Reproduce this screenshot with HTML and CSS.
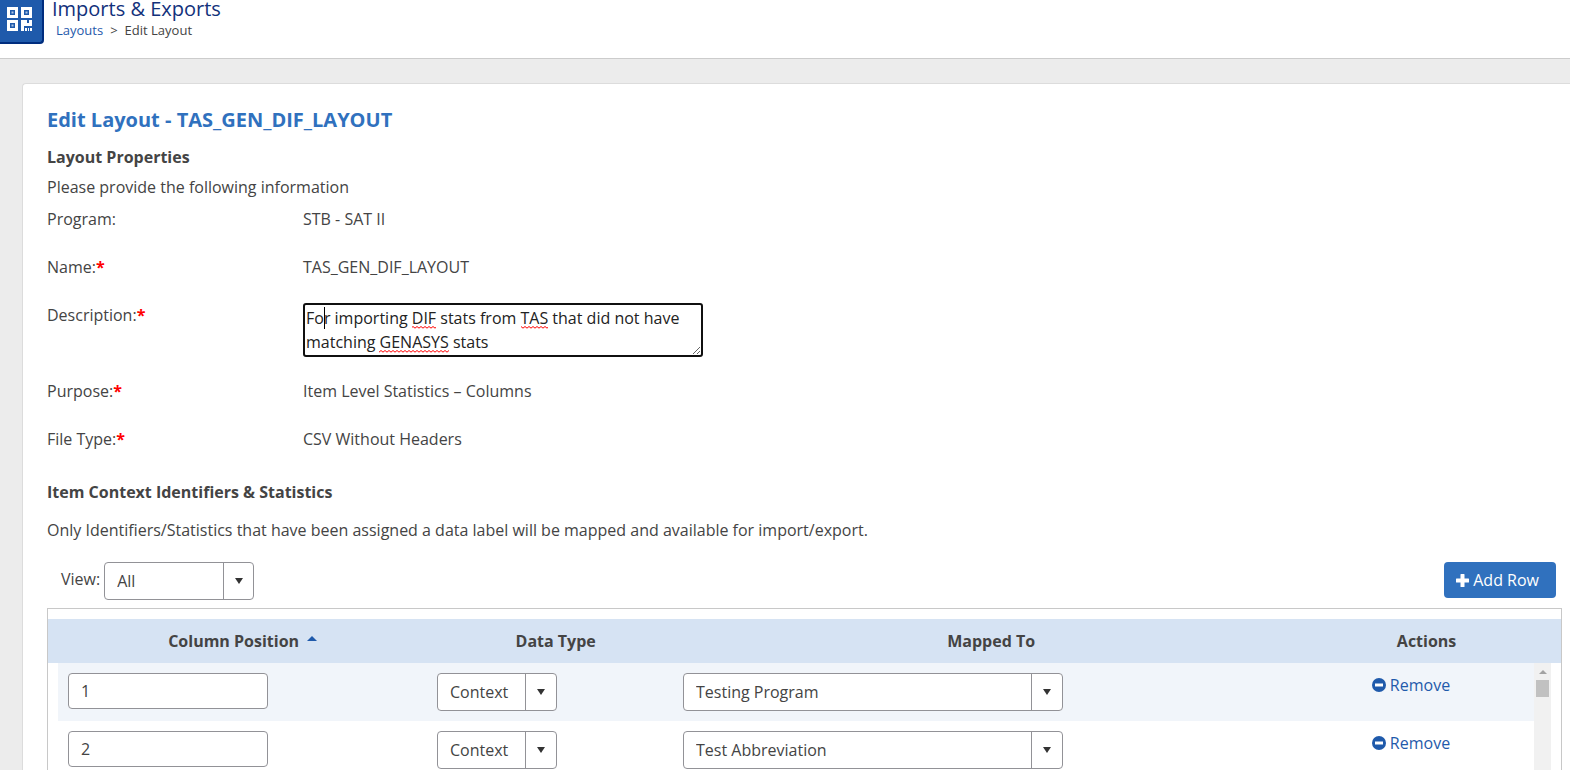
FILE: index.html
```
<!DOCTYPE html>
<html lang="en">
<head>
<meta charset="utf-8">
<meta name="viewport" content="width=device-width, initial-scale=1">
<title>Imports &amp; Exports - Edit Layout</title>
<link rel="stylesheet" href="styles.css">
</head>
<body>
<header class="app-header">
  <div class="app-icon">
    <svg viewBox="0 0 25 24" width="25" height="24" aria-hidden="true">
      <g fill="none" stroke="#fff" stroke-width="3">
        <path d="M1.5 1.5h8v8h-8zM15.500 1.500h8v8h-8zM1.500 14.500h8v8h-8z"/>
      </g>
      <path fill="#fff" d="M4.500 4.500h2v2h-2zM18.500 4.500h2v2h-2zM4.500 17.500h2v2h-2z" opacity=".65"/>
      <path fill="#fff" d="M14 13h6v3h2v-3h3v6h-8v5h-3zM18 21h2v3h-2zM21 21h1v3h-1zM23 21h2v3h-2z"/>
    </svg>
  </div>
  <div class="app-heading">
    <h1 class="app-title">Imports &amp; Exports</h1>
    <nav class="breadcrumb" aria-label="Breadcrumb">
      <a href="#">Layouts</a><span>&gt;</span><span>Edit Layout</span>
    </nav>
  </div>
</header>

<main class="card">
  <h2 class="page-title">Edit Layout - TAS_GEN_DIF_LAYOUT</h2>
  <h3 class="section-title">Layout Properties</h3>
  <p class="intro">Please provide the following information</p>

  <dl class="properties">
    <dt>Program:</dt><dd>STB - SAT II</dd>
    <dt>Name:<b class="required">*</b></dt><dd>TAS_GEN_DIF_LAYOUT</dd>
    <dt><label for="description">Description:<b class="required">*</b></label></dt>
    <dd class="description">
      <textarea id="description" rows="2" spellcheck="false">For importing DIF stats from TAS that did not have matching GENASYS stats</textarea>
      <svg class="spelling" viewBox="0 0 400 54" width="400" height="54" aria-hidden="true">
        <defs>
          <pattern id="squiggle" width="4" height="3" patternUnits="userSpaceOnUse">
            <path d="M-1 3L2 0.500L5 3" fill="none" stroke="#f00" stroke-width="1"/>
          </pattern>
        </defs>
        <g fill="url(#squiggle)">
          <rect x="109" y="0" width="24" height="3" transform="translate(0 23)"/>
          <rect x="218" y="0" width="27" height="3" transform="translate(0 23)"/>
          <rect x="76" y="0" width="70" height="3" transform="translate(0 47)"/>
        </g>
        <path d="M21 4h1v22h-1z" fill="#000"/>
      </svg>
    </dd>
    <dt>Purpose:<b class="required">*</b></dt><dd>Item Level Statistics – Columns</dd>
    <dt>File Type:<b class="required">*</b></dt><dd>CSV Without Headers</dd>
  </dl>

  <h3 class="section-title">Item Context Identifiers &amp; Statistics</h3>
  <p class="note">Only Identifiers/Statistics that have been assigned a data label will be mapped and available for import/export.</p>

  <div class="toolbar">
    <label for="view">View:</label>
    <span class="dropdown view-dropdown"><select id="view"><option>All</option></select></span>
    <button class="add-row" type="button">
      <svg viewBox="0 0 13 13" width="13" height="13" aria-hidden="true"><path fill="currentColor" d="M5 0h3q.5 0 .5.5v4h4q.5 0 .5.5v3q0 .5-.5.5h-4v4q0 .5-.5.5h-3q-.5 0-.5-.5v-4h-4q-.5 0-.5-.5v-3q0-.5.5-.5h4v-4q0-.5.5-.5z"/></svg>
      Add Row
    </button>
  </div>

  <section class="grid">
    <div class="grid-head">
      <table>
        <colgroup><col class="col-position"><col class="col-type"><col class="col-mapped"><col class="col-actions"></colgroup>
        <thead>
          <tr><th scope="col">Column Position<span class="sort-asc"></span></th><th scope="col">Data Type</th><th scope="col">Mapped To</th><th scope="col">Actions</th></tr>
        </thead>
      </table>
    </div>
    <div class="grid-body">
      <table>
        <colgroup><col class="col-position"><col class="col-type"><col class="col-mapped"><col class="col-actions"></colgroup>
        <tbody>
          <tr>
            <td><input class="position" type="text" value="1" aria-label="Column position"></td>
            <td><span class="dropdown type-dropdown"><select aria-label="Data type"><option>Context</option></select></span></td>
            <td><span class="dropdown mapped-dropdown"><select aria-label="Mapped to"><option>Testing Program</option></select></span></td>
            <td class="actions"><a class="remove" href="#"><svg viewBox="0 0 14 14" width="14" height="14" aria-hidden="true"><circle cx="7" cy="7" r="7" fill="currentColor"/><path fill="#fff" d="M3 5.500h8v3H3z"/></svg>Remove</a></td>
          </tr>
          <tr>
            <td><input class="position" type="text" value="2" aria-label="Column position"></td>
            <td><span class="dropdown type-dropdown"><select aria-label="Data type"><option>Context</option></select></span></td>
            <td><span class="dropdown mapped-dropdown"><select aria-label="Mapped to"><option>Test Abbreviation</option></select></span></td>
            <td class="actions"><a class="remove" href="#"><svg viewBox="0 0 14 14" width="14" height="14" aria-hidden="true"><circle cx="7" cy="7" r="7" fill="currentColor"/><path fill="#fff" d="M3 5.500h8v3H3z"/></svg>Remove</a></td>
          </tr>
        </tbody>
      </table>
      <div class="scrollbar" aria-hidden="true"><span class="scroll-up"></span><span class="scroll-thumb"></span></div>
    </div>
  </section>
</main>
</body>
</html>
```
FILE: styles.css
```
* { box-sizing: border-box; }

body {
  margin: 0;
  height: 100vh;
  overflow: hidden;
  background: #ececec;
  color: #444;
  font: 16px/24px "Open Sans", "Noto Sans", sans-serif;
}

h1, h2, h3, p, dl, dd { margin: 0; }
a { color: #1f5aab; text-decoration: none; }
input, select, textarea, button { font: inherit; color: inherit; }

/* Header */
.app-header {
  display: flex;
  gap: 8px;
  height: 59px;
  background: #fff;
  border-bottom: 1px solid #ccc;
}
.app-icon {
  display: flex;
  width: 44px;
  height: 44px;
  padding: 7px;
  background: #1f5aab;
  border: solid #002d7e;
  border-width: 0 2px 2px 0;
  border-radius: 0 0 4px 0;
}
.app-title {
  color: #12317b;
  font-size: 20px;
  font-weight: 400;
  line-height: 18px;
}
.breadcrumb {
  display: flex;
  gap: 7px;
  margin-top: 2px;
  padding-left: 4px;
  font-size: 13px;
  line-height: 20px;
}

/* Card */
.card {
  margin: 24px 0 0 22px;
  padding: 24px 8px 24px 24px;
  background: #fff;
  border: 1px solid #dcdcdc;
  border-right: 0;
  border-radius: 4px 0 0 4px;
}
.page-title {
  color: #3071be;
  font-size: 20px;
  font-weight: 700;
}
.section-title { font-size: 16px; font-weight: 700; }
.page-title + .section-title { margin-top: 13px; }
.intro { margin-top: 6px; }

.properties {
  display: grid;
  grid-template-columns: 256px 1fr;
  row-gap: 24px;
  margin: 8px 0 29px;
}
.required { color: #f00; }
.description { position: relative; height: 52px; }
.description textarea {
  display: block;
  width: 400px;
  height: 54px;
  padding: 1px;
  border: 2px solid #101010;
  border-radius: 3px;
  background: #fff;
  color: #222;
  outline: 0;
  overflow: hidden;
}
.spelling {
  position: absolute;
  top: 0;
  left: 0;
  pointer-events: none;
}
.note { margin-top: 14px; }

/* Toolbar */
.toolbar {
  display: flex;
  align-items: flex-start;
  gap: 4px;
  margin-top: 20px;
  padding: 0 6px 8px 14px;
}
.toolbar label { padding-top: 5px; }
.add-row {
  display: flex;
  align-items: center;
  gap: 4px;
  height: 36px;
  margin-left: auto;
  padding: 0 17px 0 12px;
  border: 0;
  border-radius: 4px;
  background: #3071be;
  color: #fff;
}

.dropdown {
  position: relative;
  display: block;
  height: 38px;
}
.dropdown select {
  width: 100%;
  height: 100%;
  padding: 0 32px 0 12px;
  border: 1px solid #929297;
  border-radius: 4px;
  background: #fff;
  appearance: none;
}
.dropdown::before,
.dropdown::after {
  content: "";
  position: absolute;
  pointer-events: none;
}
.dropdown::before {
  top: 0;
  bottom: 0;
  right: 31px;
  border-left: 1px solid #929297;
}
.dropdown::after {
  top: 16px;
  right: 12px;
  border: solid transparent;
  border-width: 6px 4px 0;
  border-top-color: #333;
}
.view-dropdown { width: 150px; }
.view-dropdown::before { right: 30px; }
.view-dropdown::after { right: 11px; }
.type-dropdown { width: 120px; }
.mapped-dropdown { width: 380px; }

/* Grid */
.grid {
  padding-top: 10px;
  border: 1px solid #c8c8c8;
}
.grid-head { padding: 0 10px; background: #d6e3f3; }
.grid table {
  width: 100%;
  border-collapse: collapse;
  table-layout: fixed;
}
.col-position { width: 25%; }
.col-type, .col-actions { width: 16.667%; }
.grid th { padding: 10px; }
.sort-asc {
  display: inline-block;
  margin: 0 4px 0 8px;
  border: solid transparent;
  border-width: 0 5px 5px;
  border-bottom-color: #1f5aab;
  vertical-align: 6px;
}
.grid-body { display: flex; padding: 0 10px; }
.grid-body table { flex: 1; }
.grid td { height: 58px; padding: 10px; vertical-align: top; }
.grid tbody tr:nth-child(odd) { background: #f1f5fa; }
.position {
  display: block;
  width: 200px;
  height: 36px;
  padding: 0 12px;
  border: 1px solid #929297;
  border-radius: 4px;
  background: #fff;
}
.actions { text-align: center; }
.remove { display: inline-flex; align-items: center; gap: 4px; }

.scrollbar {
  display: flex;
  flex-direction: column;
  align-items: center;
  gap: 6px;
  width: 17px;
  padding-top: 7px;
  background: #f1f1f1;
}
.scroll-up {
  border: solid transparent;
  border-width: 0 4px 4px;
  border-bottom-color: #a3a3a3;
}
.scroll-thumb { width: 13px; height: 17px; background: #c1c1c1; }
```
